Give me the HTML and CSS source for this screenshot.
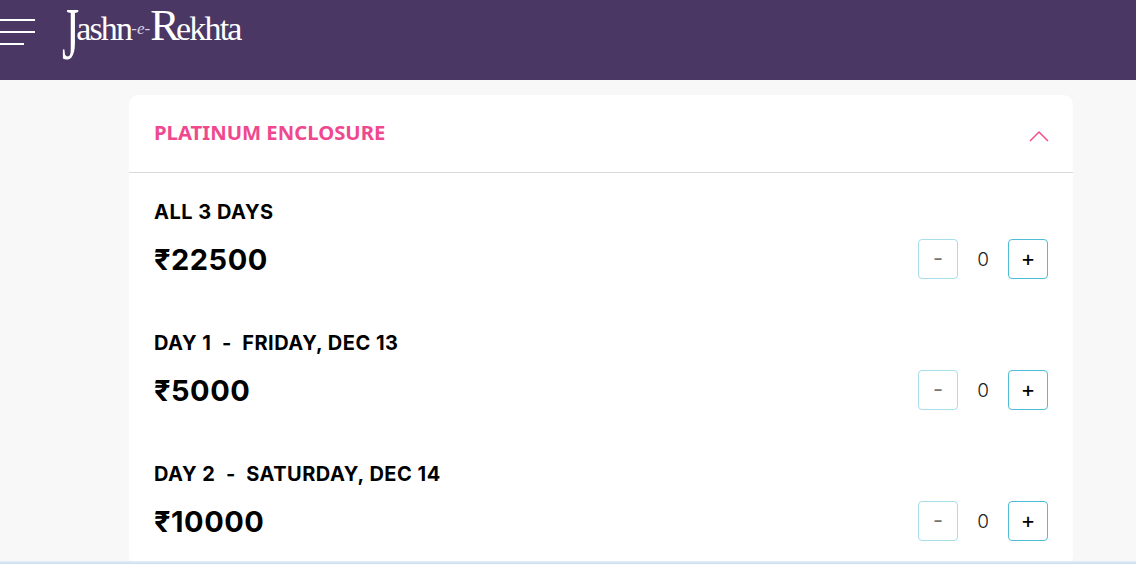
FILE: index.html
```html
<!DOCTYPE html>
<html lang="en">

<head>
    <meta charset="UTF-8" />
    <meta name="viewport" content="width=device-width, initial-scale=1.0" />
    <title>Jashn-e-Rekhta - Tickets</title>
    <link rel="stylesheet" href="styles.css">
</head>

<body>
    <header class="topbar">
        <button class="menu-btn" aria-label="Menu">
            <span class="menu-line"></span>
            <span class="menu-line"></span>
            <span class="menu-line menu-line-short"></span>
        </button>
        <a class="logo" href="#">
            <span class="logo-j">J</span><span class="logo-word">ashn</span><span class="logo-e">-e-</span><span class="logo-r">R</span><span class="logo-word">ekhta</span>
        </a>
    </header>

    <main class="content">
        <section class="card">
            <div class="card-head">
                <h2 class="card-title">PLATINUM ENCLOSURE</h2>
                <svg class="chevron" width="20" height="12" viewBox="0 0 20 12">
                    <path d="M1 11 L10 2 L19 11" fill="none" stroke="#ef4f91" stroke-width="1.5" />
                </svg>
            </div>

            <div class="ticket">
                <h3 class="ticket-name">ALL 3 DAYS</h3>
                <div class="ticket-row">
                    <span class="price">₹22500</span>
                    <div class="stepper">
                        <button class="step step-minus">-</button>
                        <span class="qty">0</span>
                        <button class="step step-plus">+</button>
                    </div>
                </div>
            </div>

            <div class="ticket">
                <h3 class="ticket-name">DAY 1 &nbsp;-&nbsp; FRIDAY, DEC 13</h3>
                <div class="ticket-row">
                    <span class="price">₹5000</span>
                    <div class="stepper">
                        <button class="step step-minus">-</button>
                        <span class="qty">0</span>
                        <button class="step step-plus">+</button>
                    </div>
                </div>
            </div>

            <div class="ticket">
                <h3 class="ticket-name">DAY 2 &nbsp;-&nbsp; SATURDAY, DEC 14</h3>
                <div class="ticket-row">
                    <span class="price">₹10000</span>
                    <div class="stepper">
                        <button class="step step-minus">-</button>
                        <span class="qty">0</span>
                        <button class="step step-plus">+</button>
                    </div>
                </div>
            </div>
        </section>
    </main>

    <div class="bottom-edge"></div>
</body>

</html>
```

FILE: styles.css
```css
html,
body {
    height: 100%;
}

body {
    margin: 0;
    background-color: #f8f8f8;
    font-family: "Inter", "Liberation Sans", sans-serif;
    overflow: hidden;
}

.topbar {
    display: flex;
    align-items: flex-start;
    height: 80px;
    background-color: #4a3763;
}

.menu-btn {
    display: flex;
    flex-direction: column;
    gap: 10px;
    width: 35px;
    margin: 19px 0 0;
    padding: 0;
    background: none;
    border: none;
}

.menu-line {
    display: block;
    width: 35px;
    height: 2px;
    background-color: #fff;
}

.menu-line-short {
    width: 24px;
}

.logo {
    display: block;
    margin: 0 0 0 27px;
    color: #fff;
    font-family: "Liberation Serif", serif;
    font-size: 34px;
    line-height: 40px;
    text-decoration: none;
    white-space: nowrap;
}

.logo-word {
    letter-spacing: -1.8px;
}

.logo-j {
    display: inline-block;
    margin-right: -3px;
    font-size: 44px;
    line-height: 51px;
    transform: scaleY(1.7);
    transform-origin: 50% 13px;
}

.logo-r {
    font-size: 44px;
    letter-spacing: -3.5px;
}

.logo-e {
    position: relative;
    top: -6px;
    color: #d9d2e2;
    font-size: 17px;
    font-style: italic;
}

.content {
    width: 944px;
    margin: 15px 0 0 129px;
}

.card {
    background-color: #fff;
    border-radius: 10px;
}

.card-head {
    display: flex;
    justify-content: space-between;
    align-items: center;
    height: 77px;
    padding: 0 24px 0 25px;
    border-bottom: 1px solid #d8d8d8;
}

.card-title {
    margin: 0 0 4px;
    color: #f0488f;
    font-family: "Noto Sans", sans-serif;
    font-size: 20.3px;
    font-weight: 700;
}

.chevron {
    margin-top: 4px;
}

.ticket {
    height: 131px;
    padding: 26px 25px 0;
    box-sizing: border-box;
}

.ticket-name {
    margin: 0;
    color: #000;
    font-size: 20px;
    line-height: 26px;
    font-weight: 700;
    letter-spacing: 0.5px;
}

.ticket-row {
    display: flex;
    justify-content: space-between;
    align-items: center;
    margin-top: 14px;
}

.price {
    margin: 1px 0 -1px;
    color: #000;
    font-size: 29px;
    line-height: 40px;
    font-weight: 700;
    letter-spacing: 0.5px;
}

.stepper {
    display: flex;
    align-items: center;
}

.step {
    width: 40px;
    height: 40px;
    padding: 0 0 2px;
    background-color: #fff;
    border: 1px solid #4fbcd8;
    border-radius: 4px;
    font-family: "Inter", sans-serif;
    font-size: 22px;
}

.step-minus {
    border-color: #a6deea;
    color: #777;
}

.step-plus {
    color: #000;
}

.qty {
    width: 50px;
    text-align: center;
    color: #222;
    font-size: 19px;
    font-weight: 300;
}

.bottom-edge {
    position: fixed;
    left: 0;
    right: 0;
    bottom: 0;
    height: 3px;
    background: linear-gradient(#e6eff8, #c8dcf0);
}
```
